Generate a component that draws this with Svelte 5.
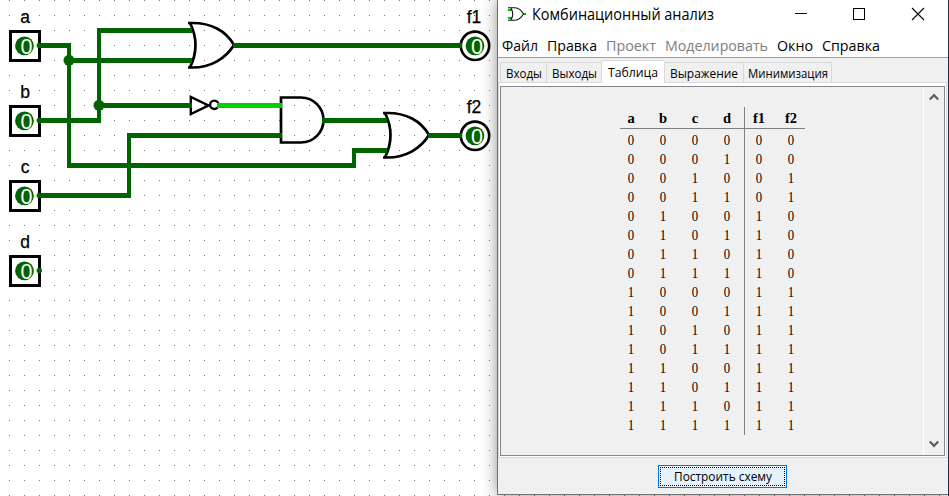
<script>
  const inputs = [
    { name: 'a', y: 45.5 },
    { name: 'b', y: 120.5 },
    { name: 'c', y: 195.5 },
    { name: 'd', y: 270.5 },
  ];
  const outputs = [
    { name: 'f1', y: 45.5 },
    { name: 'f2', y: 135.5 },
  ];
  const gates = [[0, 0], [195, 90]];
  const menu = [
    ['Файл', 36], ['Правка', 50], ['Проект', 50, true],
    ['Моделировать', 103, true], ['Окно', 36], ['Справка', 58],
  ];
  const tabs = [
    ['Входы', 36, 46], ['Выходы', 45, 55], ['Таблица', 50, 63, true],
    ['Выражение', 68, 79], ['Минимизация', 80, 89],
  ];
  const head = ['a', 'b', 'c', 'd', 'f1', 'f2'];
  const rows = Array.from({ length: 16 }, (_, i) => {
    const [a, b, c, d] = [8, 4, 2, 1].map((m) => (i & m ? 1 : 0));
    return [a, b, c, d, a | b, a | ((1 - b) & c)];
  });
</script>

<main>
  <svg class="canvas" width="949" height="496" viewBox="0 0 949 496">
    <defs>
      <pattern id="grid" x="9" y="0" width="15" height="15" patternUnits="userSpaceOnUse">
        <rect width="1" height="1" fill="#777" />
      </pattern>
    </defs>
    <rect width="949" height="496" fill="url(#grid)" shape-rendering="crispEdges" />

    {#each inputs as p}
      <rect x="10.5" y={p.y - 14} width="29" height="29" class="shape" />
      <text x="25" y={p.y - 22.5} class="label">{p.name}</text>
    {/each}
    {#each outputs as p}
      <circle cx="475" cy={p.y + 0.3} r="14.2" class="shape pin" />
      <text x="474" y={p.y - 22.5} class="label">{p.name}</text>
    {/each}

    {#each gates as [x, y]}
      <path class="shape gate" transform="translate({x} {y})"
        d="M188 23H191C211 22.5 226 31 234 45C226 58 211 68 191 67.5H188M190 23Q201 45 190 67.5" />
    {/each}
    <path class="shape gate" d="M281 97.5H301A22.5 22.5 0 0 1 301 142.5H281Z" />
    <path class="shape not" d="M190.8 97V114L208.5 105.5Z" />
    <circle class="shape not" cx="214.3" cy="104.8" r="4.2" />

    <g class="wires">
      <path class="h" d="M39 45.5H71M69 60.5H192M97 30.5H192M39 120.5H101M99 105.5H192M39 195.5H131M128 135.5H282M67 165.5H356M352 150.5H387M322 120.5H387M233 45.5H462M428 135.5H462" />
      <path class="v" d="M69 43V168M99 28V123M129 133V198M354 148V168" />
      <path class="h live" d="M217 105.5H282" />
    </g>
    <circle cx="69" cy="60.3" r="5.5" fill="#006400" />
    <circle cx="99" cy="105.3" r="5.5" fill="#006400" />

    {#each [...inputs.map((p) => [24.5, p.y]), ...outputs.map((p) => [475, p.y])] as [x, y]}
      <circle cx={x} cy={y + 0.3} r="9.4" fill="#006400" />
      <text x={x + 2} y={y + 8} class="value">0</text>
    {/each}
    {#each inputs as p}
      <circle cx="39.3" cy={p.y} r="2.7" fill="#006400" />
    {/each}
  </svg>

  <section class="window">
    <header>
      <svg width="18" height="14" viewBox="0 0 18 14" fill="none">
        <path d="M0 3H4M0 11H4M15 7H18" stroke="#0b0" stroke-width="2" />
        <path d="M0 .8H7Q12 1 15.5 7Q12 13 7 13.2H0M3 1Q6.5 7 3 13" stroke="#111" stroke-width="1.1" />
      </svg>
      <svg class="title" width="190" height="28"><text x="0" y="20" textLength="182" lengthAdjust="spacingAndGlyphs">Комбинационный анализ</text></svg>
      <svg class="controls" width="130" height="28" viewBox="0 0 130 28" fill="none" stroke="#000" shape-rendering="crispEdges">
        <path d="M1 13.5H13M59.5 8.5H70.5V19.5H59.5Z" />
        <path d="M118 8L130 20M130 8L118 20" shape-rendering="auto" stroke-width="1.1" />
      </svg>
    </header>

    <nav>
      {#each menu as [name, w, off]}
        <svg width={w} height="26" class:off><text x="0" y="20" textLength={w} lengthAdjust="spacingAndGlyphs">{name}</text></svg>
      {/each}
    </nav>

    <div class="tabs">
      {#each tabs as [name, w, box, active]}
        <div class="tab" class:active style:width="{box}px">
          <svg width={w} height="19"><text x="0" y="15" textLength={w} lengthAdjust="spacingAndGlyphs">{name}</text></svg>
        </div>
      {/each}
    </div>

    <div class="panel">
      <div class="view">
        <div class="table-area">
          <div class="table">
            <div class="row head">{#each head as h}<span>{h}</span>{/each}</div>
            {#each rows as r}
              <div class="row values">{#each r as v}<span>{v}</span>{/each}</div>
            {/each}
          </div>
        </div>
        <div class="scroll">
          <svg width="10" height="8" viewBox="0 0 10 8"><path d="M.8 6.6L5 2.2L9.2 6.6" /></svg>
          <svg width="10" height="8" viewBox="0 0 10 8"><path d="M.8 1.4L5 5.8L9.2 1.4" /></svg>
        </div>
      </div>
    </div>

    <footer>
      <button><span><svg width="98" height="18"><text x="0" y="13" textLength="98" lengthAdjust="spacingAndGlyphs">Построить схему</text></svg></span></button>
    </footer>
  </section>
  <div class="edge"></div>
</main>

<style>
  :global(body) { margin: 0; background: #fff; }
  main { position: relative; width: 949px; height: 496px; overflow: hidden; background: #fff; }
  .canvas { display: block; }
  .shape { fill: none; stroke: #000; stroke-width: 3; }
  .pin { stroke-width: 2.6; }
  .gate { stroke-width: 2.7; }
  .not { stroke-width: 2.4; }
  .wires { fill: none; stroke: #006400; shape-rendering: crispEdges; }
  .h { stroke-width: 5; }
  .v { stroke-width: 4; }
  .live { stroke: #00d200; }
  .label { font: 17.5px "Liberation Sans", Arial, sans-serif; text-anchor: middle; stroke: #000; stroke-width: .25; }
  .value { font: 21.5px "Liberation Sans", Arial, sans-serif; text-anchor: middle; fill: #fff; }

  .window {
    position: absolute; left: 497px; top: 0; width: 451px; height: 495px; box-sizing: border-box;
    display: flex; flex-direction: column; background: #f0f0f0;
    border-left: 1px solid #707070; border-bottom: 1px solid #707070;
    box-shadow: 0 0 14px rgba(0, 0, 0, .45);
  }
  .edge { position: absolute; right: 0; top: 0; width: 1px; height: 496px; background: #2c2b45; }
  .window svg { display: block; overflow: visible; flex: none; }
  header { display: flex; align-items: center; height: 28px; padding-left: 10px; background: #fff; flex: none; }
  .title { margin-left: 6px; font: 15.5px "Open Sans", "Noto Sans", sans-serif; }
  .controls { margin-left: 72px; }
  nav {
    display: flex; gap: 9px; height: 30px; padding: 3px 0 0 4px; box-sizing: border-box; flex: none;
    background: #fff; font: 14.5px "Open Sans", "Noto Sans", sans-serif; border-bottom: 1px solid #a0a0a0;
    margin-bottom: 2px;
  }
  .off { fill: #7d7d7d; }
  .tabs { display: flex; align-items: flex-end; height: 22px; padding-left: 2px; flex: none; font: 12px "Open Sans", "Noto Sans", sans-serif; }
  .tab {
    display: flex; justify-content: center; align-items: center; height: 20px; box-sizing: border-box;
    border: 1px solid #d9d9d9; border-bottom: 0; border-right-width: 0; background: #f0f0f0;
  }
  .tab:last-child { border-right-width: 1px; }
  .tab.active { height: 23px; background: #fff; padding: 0 0 2px; margin-bottom: -1px; z-index: 1; }
  .panel { height: 376px; width: 449px; box-sizing: border-box; border: 1px solid #d9d9d9; background: #fff; padding: 3px 1px 1px; flex: none; }
  .view { display: flex; height: 370px; box-sizing: border-box; border: 1px solid #828790; background: #f0f0f0; }
  .table-area { flex: 1; padding: 22px 0 0 114px; }
  .scroll {
    width: 21px; border-left: 1px solid #fff; display: flex; flex-direction: column;
    justify-content: space-between; align-items: center; padding: 6px 1px 7px 0; box-sizing: border-box;
  }
  .scroll path { fill: none; stroke: #606060; stroke-width: 2.2; }
  .table { position: relative; width: 192px; font: 15px/19px "Liberation Serif", "Times New Roman", serif; color: #000; }
  .table::before { content: ""; position: absolute; left: 129px; top: -2px; width: 1px; height: 328px; background: #808080; }
  .table::after { content: ""; position: absolute; left: 5px; top: 19px; width: 185px; height: 1px; background: #808080; }
  .row { display: flex; height: 19px; }
  .row span { width: 32px; text-align: center; }
  .values span { transform: scaleX(.85); }
  .head { font-weight: bold; font-size: 14.5px; margin-bottom: 3px; }
  footer { display: flex; justify-content: center; padding-top: 7px; }
  button {
    width: 129px; height: 23px; padding: 1px; border: 1px solid #0078d7; background: #e5f1fb; box-sizing: border-box;
    font: 12px "Open Sans", "Noto Sans", sans-serif; color: #000; margin-right: 1px;
  }
  button span { display: flex; justify-content: center; align-items: center; height: 19px; box-sizing: border-box; border: 1px dotted #000; }
</style>
